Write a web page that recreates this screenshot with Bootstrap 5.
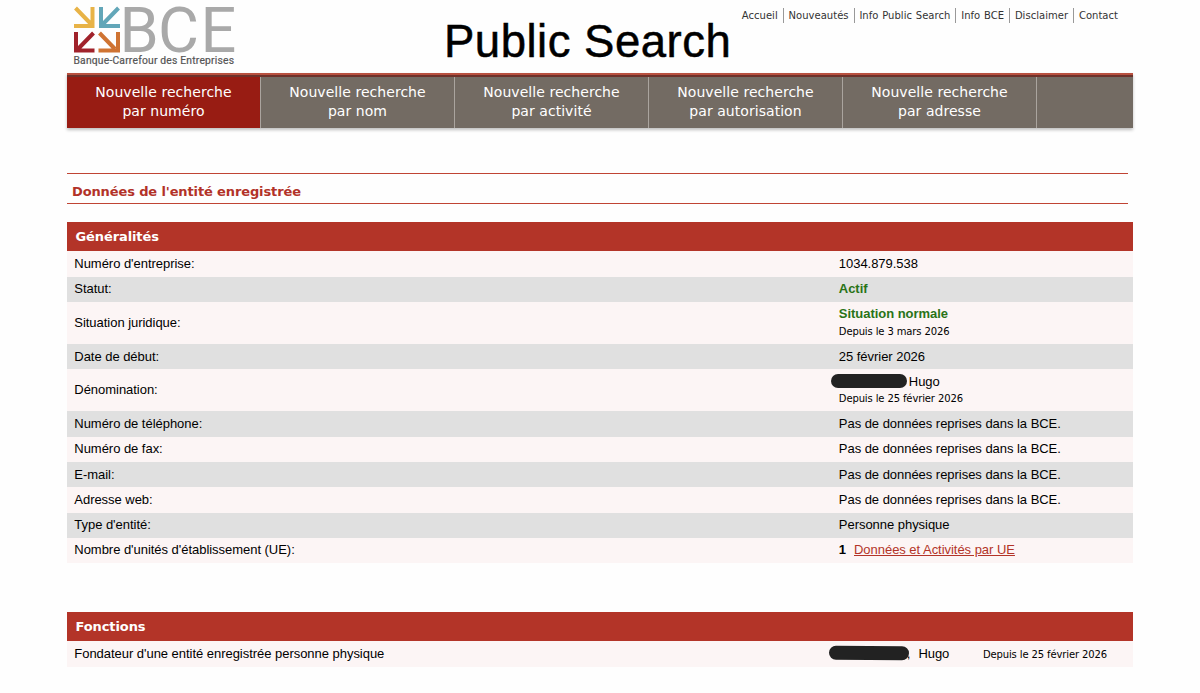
<!DOCTYPE html>
<html lang="fr">
<head>
<meta charset="utf-8">
<meta name="viewport" content="width=device-width, initial-scale=1">
<title>BCE Public Search</title>
<link href="https://cdn.jsdelivr.net/npm/bootstrap@5.3.0/dist/css/bootstrap.min.css" rel="stylesheet">
<style>
  body { font-family: "Liberation Sans", Arial, sans-serif; font-size: 13px; line-height: 17px; color: #000; background: #fefefe; }
  .page { width: 1066px; margin-left: 67px; }
  .verdana { font-family: "DejaVu Sans", Verdana, sans-serif; }
  .top { height: 73px; }
  .logo { width: 170px; height: 66px; margin: 4px 0 0 3px; overflow: visible; }
  .headline { font-size: 45.5px; line-height: 50px; margin: 17px 0 0 204px; width: 292px; letter-spacing: .5px; white-space: nowrap; font-weight: 400; color: #000; -webkit-text-stroke: .5px #000; }
  .toplinks { font-size: 10px; line-height: 15px; margin: 8px 10px 0 0; word-spacing: .6px; letter-spacing: .03px; }
  .toplinks a { color: #333; padding: 0 5px 0 4.8px; white-space: nowrap; }
  .toplinks a + a { border-left: 1px solid #999; }
  .tabs { height: 55px; background: #736b63; border-top: 2px solid #b8503f; box-shadow: 0 2px 3px rgba(0,0,0,.25); }
  .tabs::before { content: ""; height: 2px; background: #6d322b; flex: none; }
  .tabs a { width: 194px; color: #fff; font-size: 14px; line-height: 18.5px; letter-spacing: .05px; padding-top: 6px; border-right: 1px solid #aaa49e; text-align: center; }
  .tabs a.active { background: #981c13; }
  .entity { margin-top: 45px; width: 1061px; height: 31px; border-top: 1px solid #c04434; border-bottom: 1px solid #c04434; color: #b23228; font-size: 13px; font-weight: 700; line-height: 17px; letter-spacing: -.12px; padding: 9px 0 0 5px; }
  .block-title { height: 29.7px; background: #b33428; color: #fff; font-size: 13px; font-weight: 700; line-height: 17px; letter-spacing: -.1px; padding: 6px 0 0 8.5px; margin: 0; }
  .general { margin-top: 17.8px; }
  .functions { margin-top: 48.5px; }
  .data { height: 25.28px; background: #fcf5f5; padding: 0 0 .9px 7.3px; letter-spacing: -.035px; }
  .data:nth-child(even) { background: #e0e0e0; }
  .data.tall { height: 42.1px; }
  .lbl { width: 764.5px; flex: none; }
  .ok { color: #297317; font-weight: 700; }
  .since { font-size: 10px; line-height: 17px; letter-spacing: -.12px; padding-top: .5px; }
  .data a { color: #b33428; margin-left: 8px; }
  .mask { display: inline-block; background: #222; border-radius: 7px; height: 14px; flex: none; }
  .mask-name { width: 76px; margin: 0 2px 0 -8px; height: 13.5px; }
  .mask-founder { width: 80px; margin: 0 -2px 0 -10px; transform: rotate(.4deg); }
  .since-founder { margin-right: 26px; padding-top: 1.5px; }
</style>
<script src="https://cdn.jsdelivr.net/npm/bootstrap@5.3.0/dist/js/bootstrap.bundle.min.js"></script>
</head>
<body>
<div class="page">
  <header class="top d-flex align-items-start">
    <svg class="logo flex-shrink-0" viewBox="70 4 170 66" role="img" aria-label="BCE">
      <g fill="none" stroke-width="4">
        <path stroke="#e8b347" d="M75.500 8 91 24M74 26H92.500V7"/>
        <path stroke="#62a6b8" d="M118.500 8 103 24M120 26H101V7"/>
        <path stroke="#a0222b" d="M93.500 33 78 49M94.500 50.500H76V32"/>
        <path stroke="#cf7332" d="M99.500 33 115 49M98.500 50.500H118V32"/>
      </g>
      <text x="119.500 158 200.500" y="52" font-family="Roboto, sans-serif" font-size="63" fill="#a9a9a9">BCE</text>
      <text x="73.500" y="64" font-family="Roboto, sans-serif" font-size="10.300" fill="#555" stroke="#555" stroke-width=".2" textLength="160.500" lengthAdjust="spacing">Banque-Carrefour des Entreprises</text>
    </svg>
    <h1 class="headline flex-shrink-0">Public Search</h1>
    <nav class="toplinks verdana d-flex ms-auto">
      <a class="text-decoration-none">Accueil</a><a class="text-decoration-none">Nouveautés</a><a class="text-decoration-none">Info Public Search</a><a class="text-decoration-none">Info BCE</a><a class="text-decoration-none">Disclaimer</a><a class="text-decoration-none">Contact</a>
    </nav>
  </header>
  <nav class="tabs verdana d-flex flex-column">
    <div class="d-flex flex-grow-1">
      <a class="active text-decoration-none">Nouvelle recherche<br>par numéro</a>
      <a class="text-decoration-none">Nouvelle recherche<br>par nom</a>
      <a class="text-decoration-none">Nouvelle recherche<br>par activité</a>
      <a class="text-decoration-none">Nouvelle recherche<br>par autorisation</a>
      <a class="text-decoration-none">Nouvelle recherche<br>par adresse</a>
    </div>
  </nav>
  <main>
    <h2 class="entity verdana mb-0">Données de l'entité enregistrée</h2>
    <section class="general">
      <h3 class="block-title verdana">Généralités</h3>
      <div>
        <div class="data d-flex align-items-center"><span class="lbl">Numéro d'entreprise:</span><span>1034.879.538</span></div>
        <div class="data d-flex align-items-center"><span class="lbl">Statut:</span><span class="ok">Actif</span></div>
        <div class="data tall d-flex align-items-center"><span class="lbl">Situation juridique:</span><div><div class="ok">Situation normale</div><div class="since verdana">Depuis le 3 mars 2026</div></div></div>
        <div class="data d-flex align-items-center"><span class="lbl">Date de début:</span><span>25 février 2026</span></div>
        <div class="data tall d-flex align-items-center"><span class="lbl">Dénomination:</span><div><div class="d-flex align-items-center"><span class="mask mask-name"></span>Hugo</div><div class="since verdana">Depuis le 25 février 2026</div></div></div>
        <div class="data d-flex align-items-center"><span class="lbl">Numéro de téléphone:</span><span>Pas de données reprises dans la BCE.</span></div>
        <div class="data d-flex align-items-center"><span class="lbl">Numéro de fax:</span><span>Pas de données reprises dans la BCE.</span></div>
        <div class="data d-flex align-items-center"><span class="lbl">E-mail:</span><span>Pas de données reprises dans la BCE.</span></div>
        <div class="data d-flex align-items-center"><span class="lbl">Adresse web:</span><span>Pas de données reprises dans la BCE.</span></div>
        <div class="data d-flex align-items-center"><span class="lbl">Type d'entité:</span><span>Personne physique</span></div>
        <div class="data d-flex align-items-center"><span class="lbl">Nombre d'unités d'établissement (UE):</span><b>1</b><a href="#">Données et Activités par UE</a></div>
      </div>
    </section>
    <section class="functions">
      <h3 class="block-title verdana">Fonctions</h3>
      <div>
        <div class="data d-flex align-items-center"><span class="lbl">Fondateur d'une entité enregistrée personne physique</span><span class="mask mask-founder"></span><span>,</span><span class="ms-1 ps-1 me-auto">Hugo</span><span class="since since-founder verdana">Depuis le 25 février 2026</span></div>
      </div>
    </section>
  </main>
</div>
</body>
</html>
